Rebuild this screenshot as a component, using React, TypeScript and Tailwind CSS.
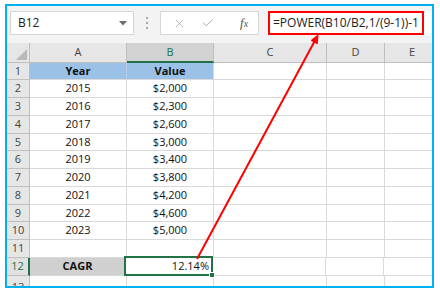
import React from 'react';
import { X, Check } from 'lucide-react';

const rows = [
  { n: 1, a: 'Year', b: 'Value', h: 'h-[17px]', head: true },
  { n: 2, a: '2015', b: '$2,000', h: 'h-[18px]' },
  { n: 3, a: '2016', b: '$2,300', h: 'h-[18px]' },
  { n: 4, a: '2017', b: '$2,600', h: 'h-[18px]' },
  { n: 5, a: '2018', b: '$3,000', h: 'h-[17px]' },
  { n: 6, a: '2019', b: '$3,400', h: 'h-[18px]' },
  { n: 7, a: '2020', b: '$3,800', h: 'h-[18px]' },
  { n: 8, a: '2021', b: '$4,200', h: 'h-[18px]' },
  { n: 9, a: '2022', b: '$4,600', h: 'h-[17px]' },
  { n: 10, a: '2023', b: '$5,000', h: 'h-[18px]' },
  { n: 11, a: '', b: '', h: 'h-[18px]' },
];

const cell = 'shrink-0 border-r border-b border-[#d9d9d9] flex items-center';

const App: React.FC = () => {
  return (
    <div className="relative w-[440px] h-[294px] bg-white pl-[5px] pt-[4px] font-['Open_Sans',sans-serif]">
      <div className="w-[429px] h-[284px] border-2 border-[#00b0f0] overflow-hidden flex flex-col bg-white">
        {/* formula bar */}
        <div className="h-[37px] shrink-0 bg-[#f3f3f3] flex pt-[5px] pl-[3px]">
          <div className="w-[124px] h-[24px] bg-white border border-[#d6d6d6] flex items-center justify-between pl-[7px] pr-[6px]">
            <span className="text-[12px] text-[#222]">B12</span>
            <svg width="8" height="5" viewBox="0 0 8 5">
              <path d="M0 0 L8 0 L4 4.5 Z" fill="#6b6b6b" />
            </svg>
          </div>
          <div className="w-[26px] h-[24px] flex flex-col items-center justify-center gap-[3px]">
            <span className="w-[2px] h-[2px] bg-[#a8a8a8]" />
            <span className="w-[2px] h-[2px] bg-[#a8a8a8]" />
            <span className="w-[2px] h-[2px] bg-[#a8a8a8]" />
          </div>
          <div className="w-[99px] h-[24px] bg-white border border-[#d6d6d6] flex items-center pl-[12px]">
            <X size={13} strokeWidth={1.4} className="text-[#a6a6a6]" />
            <Check size={14} strokeWidth={1.6} className="text-[#a6a6a6] ml-[15px]" />
            <span className="ml-[25px] font-['Liberation_Serif',serif] italic text-[13px] text-[#555]">
              f<span className="text-[10px]">x</span>
            </span>
          </div>
          <div className="ml-[9px] flex-1 h-[24px] bg-white flex">
            <div className="w-[156px] h-[24px] border-2 border-[#ff0000] flex items-center pl-[3px]">
              <span className="text-[12px] text-[#222] whitespace-nowrap">=POWER(B10/B2,1/(9-1))-1</span>
            </div>
          </div>
        </div>

        {/* column headers */}
        <div className="flex h-[20px] shrink-0 text-[11px] text-[#444]">
          <div className="w-[23px] shrink-0 bg-[#e6e6e6] border-r border-b border-[#bfbfbf] flex items-end justify-end pr-[2px] pb-[2px]">
            <svg width="11" height="11" viewBox="0 0 11 11">
              <path d="M11 0 L11 11 L0 11 Z" fill="#b9b9b9" />
            </svg>
          </div>
          <div className="w-[97px] shrink-0 bg-[#e6e6e6] border-r border-b border-[#bfbfbf] flex items-center justify-center">A</div>
          <div className="w-[87px] shrink-0 bg-[#d2d2d2] border-r border-[#bfbfbf] border-b-2 border-b-[#217346] flex items-center justify-center text-[#217346]">B</div>
          <div className="w-[113px] shrink-0 bg-[#e6e6e6] border-r border-b border-[#bfbfbf] flex items-center justify-center">C</div>
          <div className="w-[58px] shrink-0 bg-[#e6e6e6] border-r border-b border-[#bfbfbf] flex items-center justify-center">D</div>
          <div className="w-[55px] shrink-0 bg-[#e6e6e6] border-r border-b border-[#bfbfbf] flex items-center justify-center">E</div>
        </div>

        {/* rows */}
        {rows.map((r) => (
          <div key={r.n} className={`flex shrink-0 text-[11px] text-[#111] ${r.h}`}>
            <div className="w-[23px] shrink-0 bg-[#e6e6e6] border-r border-b border-[#bfbfbf] flex items-center justify-center text-[#444]">
              {r.n}
            </div>
            <div className={`${cell} w-[97px] justify-center ${r.head ? 'bg-[#9bc2e6] font-bold border-r-[#b4cfe9]' : ''}`}>{r.a}</div>
            <div className={`${cell} w-[87px] justify-center ${r.head ? 'bg-[#9bc2e6] font-bold' : ''}`}>{r.b}</div>
            <div className={`${cell} w-[113px]`} />
            <div className={`${cell} w-[58px]`} />
            <div className={`${cell} w-[55px]`} />
          </div>
        ))}

        {/* row 12 */}
        <div className="flex shrink-0 h-[18px] text-[11px] text-[#111]">
          <div className="w-[23px] shrink-0 bg-[#e1e1e1] border-r-2 border-r-[#217346] border-b border-[#bfbfbf] flex items-center justify-center text-[#217346]">
            12
          </div>
          <div className={`${cell} w-[96px] bg-[#d0d0d0] justify-center font-bold`}>CAGR</div>
          <div className={`${cell} w-[87px] justify-end pr-[3px] relative`}>
            12.14%
            <div className="absolute -left-[2px] -top-[2px] -right-[1px] -bottom-[1px] border-2 border-[#217346]" />
            <div className="absolute -right-[3px] -bottom-[3px] w-[6px] h-[6px] bg-[#217346] border border-white" />
          </div>
          <div className={`${cell} w-[113px]`} />
          <div className={`${cell} w-[58px]`} />
          <div className={`${cell} w-[55px]`} />
        </div>

        {/* row 13, cut off by the frame */}
        <div className="flex flex-1 text-[11px]">
          <div className="w-[23px] shrink-0 bg-[#e6e6e6] border-r border-[#bfbfbf] flex justify-center pt-[3px] text-[#444]">
            13
          </div>
          <div className="w-[97px] shrink-0 border-r border-[#d9d9d9]" />
          <div className="w-[87px] shrink-0 border-r border-[#d9d9d9]" />
          <div className="w-[113px] shrink-0 border-r border-[#d9d9d9]" />
          <div className="w-[58px] shrink-0 border-r border-[#d9d9d9]" />
        </div>
      </div>

      {/* annotation arrow */}
      <svg className="absolute left-0 top-0 pointer-events-none" width="440" height="294" viewBox="0 0 440 294">
        <line x1="197" y1="259" x2="314.2" y2="42" stroke="#ff0000" strokeWidth="2" />
        <path d="M318 35 L317.3 43.7 L311.1 40.4 Z" fill="#ff0000" stroke="#ff0000" strokeWidth="1" />
      </svg>
    </div>
  );
};

export default App;
